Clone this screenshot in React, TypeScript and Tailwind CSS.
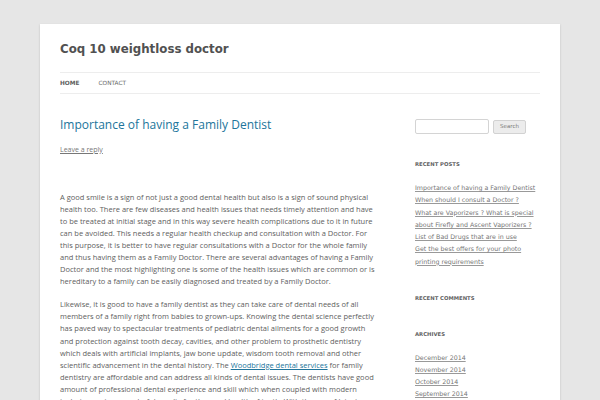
const recentPosts = [
  "Importance of having a Family Dentist",
  "When should I consult a Doctor ?",
  "What are Vaporizers ? What is special about Firefly and Ascent Vaporizers ?",
  "List of Bad Drugs that are in use",
  "Get the best offers for your photo printing requirements",
];

const archives = ["December 2014", "November 2014", "October 2014", "September 2014", "August 2014"];

const App = () => {
  return (
    <div className="min-h-[400px] bg-[#e6e6e6] pt-[24px] px-[40px] overflow-hidden">
      <div className="bg-white px-[20px] min-h-[400px] shadow-[0_1px_2px_rgba(100,100,100,0.3)]">
        <header className="pt-[15px]">
          <h1 className="font-['DejaVu_Sans',sans-serif] font-bold text-[11.8px] leading-[20px] text-[#515151]">
            Coq 10 weightloss doctor
          </h1>
          <nav className="mt-[13px] border-y border-[#ededed] h-[22px] flex items-center gap-[19px] font-['DejaVu_Sans',sans-serif] text-[5.8px] uppercase">
            <span className="font-bold text-[#5e5e5e]">Home</span>
            <span className="text-[#6a6a6a]">Contact</span>
          </nav>
        </header>
        <div className="flex gap-[40px] pt-[22px]">
          <main className="w-[315px] shrink-0">
            <h2 className="font-['Open_Sans',sans-serif] text-[12px] leading-[18px] text-[#21759b]">
              Importance of having a Family Dentist
            </h2>
            <a className="block mt-[11px] font-['Open_Sans',sans-serif] text-[7px] text-[#777] underline">Leave a reply</a>
            <div className="mt-[35px] font-['Open_Sans',sans-serif] text-[7.5px] leading-[12.1px] text-[#5e5e5e]">
              <p>
                A good smile is a sign of not just a good dental health but also is a sign of sound physical health too. There are few diseases and health issues that needs timely attention and have to be treated at initial stage and in this way severe health complications due to it in future can be avoided. This needs a regular health checkup and consultation with a Doctor. For this purpose, it is better to have regular consultations with a Doctor for the whole family and thus having them as a Family Doctor. There are several advantages of having a Family Doctor and the most highlighting one is some of the health issues which are common or is hereditary to a family can be easily diagnosed and treated by a Family Doctor.
              </p>
              <p className="mt-[11px]">
                Likewise, it is good to have a family dentist as they can take care of dental needs of all members of a family right from babies to grown-ups. Knowing the dental science perfectly has paved way to spectacular treatments of pediatric dental ailments for a good growth and protection against tooth decay, cavities, and other problem to prosthetic dentistry which deals with artificial implants, jaw bone update, wisdom tooth removal and other scientific advancement in the dental history. The{" "}
                <a className="text-[#21759b] underline">Woodbridge dental services</a> for family dentistry are affordable and can address all kinds of dental issues. The dentists have good amount of professional dental experience and skill which when coupled with modern techniques gives wonderful results for the good health of teeth. With the use of latest dental equipment, the treatments are painless and quick.
              </p>
            </div>
          </main>
          <aside className="w-[130px] shrink-0 font-['DejaVu_Sans',sans-serif]">
            <div className="mt-[3px] flex items-center gap-[4px]">
              <div className="w-[74px] h-[15px] border border-[#d4d4d4] rounded-[2px] bg-white" />
              <div className="h-[14px] px-[6px] flex items-center border border-[#d2d2d2] rounded-[2px] bg-[#ececec] text-[5.5px] text-[#7a7a7a]">
                Search
              </div>
            </div>
            <h3 className="mt-[27px] text-[5.3px] font-bold uppercase text-[#636363]">Recent Posts</h3>
            <ul className="mt-[13px] text-[6.3px] leading-[12.3px] text-[#757575]">
              {recentPosts.map((p) => (
                <li key={p}>
                  <a className="underline decoration-[#999]">{p}</a>
                </li>
              ))}
            </ul>
            <h3 className="mt-[27px] text-[5.3px] font-bold uppercase text-[#636363]">Recent Comments</h3>
            <h3 className="mt-[28px] text-[5.3px] font-bold uppercase text-[#636363]">Archives</h3>
            <ul className="mt-[13px] text-[6.3px] leading-[12px] text-[#757575]">
              {archives.map((a) => (
                <li key={a}>
                  <a className="underline decoration-[#999]">{a}</a>
                </li>
              ))}
            </ul>
          </aside>
        </div>
      </div>
    </div>
  );
};

export default App;
